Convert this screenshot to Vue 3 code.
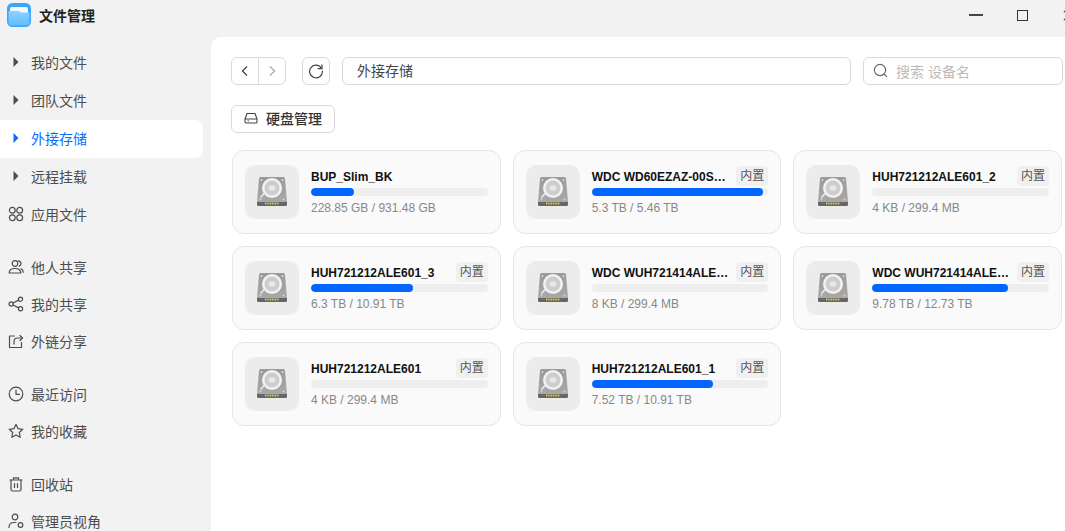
<template>
  <div class="app">
    <header class="titlebar">
      <div class="brand">
        <svg class="logo" viewBox="0 0 24 24">
          <defs>
            <linearGradient id="logoBody" x1="0" y1="0" x2="0" y2="1">
              <stop offset="0" stop-color="#8ed2ff" />
              <stop offset="1" stop-color="#63bcff" />
            </linearGradient>
          </defs>
          <rect width="24" height="24" rx="5.5" fill="#3aa6fb" />
          <path d="M3 6a2 2 0 0 1 2-2h14a2 2 0 0 1 2 2v5H3z" fill="#f2f9ff" />
          <path d="M1.500 8h10c1.500 0 2 1.500 3.500 1.500h7.500V19a3.500 3.500 0 0 1-3.500 3.500H5A3.500 3.500 0 0 1 1.500 19z" fill="url(#logoBody)" />
        </svg>
        <span class="app-name">文件管理</span>
      </div>
      <div class="win-controls">
        <span class="win-min"></span>
        <span class="win-max"></span>
        <svg class="win-close" viewBox="0 0 12 12"><path d="M1 1l10 10M11 1L1 11" stroke="#333" stroke-width="1.300" fill="none" /></svg>
      </div>
    </header>

    <div class="body">
      <aside class="sidebar">
        <nav v-for="(group, i) in navGroups" :key="i" class="nav-group" :class="group.cls">
          <a v-for="item in group.items" :key="item.label" class="nav-item" :class="{ active: item.active }">
            <span class="nav-icon">
              <svg v-if="item.icon === 'arrow'" class="caret" viewBox="0 0 6 10"><path d="M0.500 0L5.500 5L0.500 10z" fill="currentColor" /></svg>
              <svg v-else viewBox="0 0 16 16" class="glyph" fill="none" stroke="currentColor" stroke-width="1.200" stroke-linecap="round" stroke-linejoin="round">
                <template v-if="item.icon === 'apps'">
                  <circle cx="4.300" cy="4.300" r="2.900" />
                  <circle cx="11.700" cy="4.300" r="2.900" />
                  <circle cx="4.300" cy="11.700" r="2.900" />
                  <circle cx="11.700" cy="11.700" r="2.900" />
                </template>
                <template v-else-if="item.icon === 'users'">
                  <circle cx="7" cy="4.500" r="2.800" />
                  <path d="M1.200 14c0-3 2.500-4.500 5.800-4.500s5.800 1.500 5.800 4.500z" />
                  <path d="M10.500 1.900c1.700.3 2.500 1.500 2.500 2.700s-.8 2.200-1.800 2.700M13 9.800c1.300.6 2.200 1.900 2.200 3.500" />
                </template>
                <template v-else-if="item.icon === 'share'">
                  <circle cx="3.200" cy="8" r="2.100" />
                  <circle cx="12.500" cy="3.200" r="2.100" />
                  <circle cx="12.500" cy="12.800" r="2.100" />
                  <path d="M5 7l5.700-2.900M5 9l5.700 2.900" />
                </template>
                <template v-else-if="item.icon === 'link'">
                  <path d="M6.500 3H1.500v11.500h12V9.500" />
                  <path d="M6 11V8.500C6 6.500 7.500 5 9.500 5h5" />
                  <path d="M12 2.500L14.500 5 12 7.500" />
                </template>
                <template v-else-if="item.icon === 'clock'">
                  <circle cx="8" cy="8" r="6.800" />
                  <path d="M8 4v4.300h3.500" />
                </template>
                <template v-else-if="item.icon === 'star'">
                  <path d="M8 1.300l2 4.400 4.800.6-3.500 3.200.9 4.800L8 12l-4.200 2.300.9-4.800L1.200 6.300 6 5.700z" />
                </template>
                <template v-else-if="item.icon === 'trash'">
                  <path d="M2 4h12M5.500 4V1.800h5V4" />
                  <path d="M3 4v9.500a1.500 1.500 0 0 0 1.500 1.500h7a1.500 1.500 0 0 0 1.500-1.500V4" />
                  <path d="M6.500 7.500v4M9.500 7.500v4" />
                </template>
                <template v-else-if="item.icon === 'admin'">
                  <circle cx="7" cy="4" r="2.800" />
                  <path d="M1 14.500c0-3 2-5 5-5h2" />
                  <circle cx="12.500" cy="12" r="2.300" />
                </template>
              </svg>
            </span>
            <span>{{ item.label }}</span>
          </a>
        </nav>
      </aside>

      <main class="main">
        <div class="toolbar">
          <div class="nav-btns">
            <button class="nav-btn"><svg viewBox="0 0 12 12"><path d="M8 1.500L3.500 6 8 10.500" fill="none" stroke="#444" stroke-width="1.300" /></svg></button>
            <button class="nav-btn"><svg viewBox="0 0 12 12"><path d="M4 1.500L8.500 6 4 10.500" fill="none" stroke="#aaa" stroke-width="1.300" /></svg></button>
          </div>
          <button class="refresh">
            <svg viewBox="0 0 16 16" fill="none" stroke="#444" stroke-width="1.200" stroke-linecap="round"><path d="M13.700 5.500A6.400 6.400 0 1 0 14.400 8" /><path d="M14 1.800v3.900h-3.900" stroke-linejoin="round" /></svg>
          </button>
          <div class="path">外接存储</div>
          <div class="search">
            <svg viewBox="0 0 16 16" fill="none" stroke="#666" stroke-width="1.200" stroke-linecap="round"><circle cx="7.500" cy="7.500" r="6" /><path d="M12 12l2.500 2.500" /></svg>
            <span>搜索 设备名</span>
          </div>
        </div>

        <button class="disk-btn">
          <svg viewBox="0 0 14 14" fill="none" stroke="#444" stroke-width="1.100" stroke-linejoin="round"><path d="M1 8l2-5.500h8L13 8v3a1 1 0 0 1-1 1H2a1 1 0 0 1-1-1z" /><path d="M1 8h12M3.500 10h1.500" /></svg>
          <span>硬盘管理</span>
        </button>

        <section class="grid">
          <article v-for="d in disks" :key="d.name + d.size" class="card">
            <div class="hdd-box">
              <svg class="hdd" viewBox="0 0 30 30">
                <defs>
                  <linearGradient id="hddFace" x1="0" y1="0" x2="0" y2="1">
                    <stop offset="0" stop-color="#9a9a9a" />
                    <stop offset="1" stop-color="#a8a8a8" />
                  </linearGradient>
                </defs>
                <path d="M2 1.500A1.500 1.500 0 0 1 3.500 0h23A1.500 1.500 0 0 1 28 1.500L30 25H0z" fill="url(#hddFace)" />
                <path d="M0 25h30v2.500a1.500 1.500 0 0 1-1.500 1.500h-27A1.500 1.500 0 0 1 0 27.500z" fill="#666" />
                <path d="M8 26.500h14" stroke="#e8cf4a" stroke-width="2" stroke-dasharray="1 .7" />
                <circle cx="15" cy="11" r="10" fill="#f2f2f2" />
                <circle cx="15" cy="11" r="7.500" fill="#cdcdcd" />
                <ellipse cx="15" cy="11" rx="3.500" ry="2.800" fill="#e8e8e8" />
                <path d="M7 16.500l-3 3.500" stroke="#e8e8e8" stroke-width="1.800" stroke-linecap="round" />
                <circle cx="4.500" cy="3" r="1" fill="#d8d8d8" />
                <circle cx="25.500" cy="3" r="1" fill="#d8d8d8" />
                <circle cx="3.500" cy="22.500" r="1" fill="#d8d8d8" />
                <circle cx="26.500" cy="22.500" r="1" fill="#d8d8d8" />
              </svg>
            </div>
            <div class="info">
              <div class="name-row">
                <span class="name">{{ d.name }}</span>
                <span v-if="d.builtin" class="tag">内置</span>
              </div>
              <div class="bar"><div class="bar-fill" :style="{ width: d.pct + '%' }"></div></div>
              <div class="size">{{ d.size }}</div>
            </div>
          </article>
        </section>
      </main>
    </div>
  </div>
</template>

<script setup>
const navGroups = [
  {
    cls: "first",
    items: [
      { label: "我的文件", icon: "arrow" },
      { label: "团队文件", icon: "arrow" },
      { label: "外接存储", icon: "arrow", active: true },
      { label: "远程挂载", icon: "arrow" },
      { label: "应用文件", icon: "apps" },
    ],
  },
  {
    cls: "tight",
    items: [
      { label: "他人共享", icon: "users" },
      { label: "我的共享", icon: "share" },
      { label: "外链分享", icon: "link" },
    ],
  },
  {
    cls: "tight",
    items: [
      { label: "最近访问", icon: "clock" },
      { label: "我的收藏", icon: "star" },
    ],
  },
  {
    cls: "tight",
    items: [
      { label: "回收站", icon: "trash" },
      { label: "管理员视角", icon: "admin" },
    ],
  },
];

const disks = [
  { name: "BUP_Slim_BK", size: "228.85 GB / 931.48 GB", pct: 24.5, builtin: false },
  { name: "WDC WD60EZAZ-00S…", size: "5.3 TB / 5.46 TB", pct: 97, builtin: true },
  { name: "HUH721212ALE601_2", size: "4 KB / 299.4 MB", pct: 0, builtin: true },
  { name: "HUH721212ALE601_3", size: "6.3 TB / 10.91 TB", pct: 57.7, builtin: true },
  { name: "WDC WUH721414ALE…", size: "8 KB / 299.4 MB", pct: 0, builtin: true },
  { name: "WDC WUH721414ALE…", size: "9.78 TB / 12.73 TB", pct: 77, builtin: true },
  { name: "HUH721212ALE601", size: "4 KB / 299.4 MB", pct: 0, builtin: true },
  { name: "HUH721212ALE601_1", size: "7.52 TB / 10.91 TB", pct: 68.5, builtin: true },
];
</script>

<style scoped>
.app {
  width: 100vw;
  height: 100vh;
  overflow: hidden;
  display: flex;
  flex-direction: column;
  background: #f2f2f2;
  font-family: "Liberation Sans", "Noto Sans CJK SC", sans-serif;
  color: #333;
}

.titlebar {
  flex: 0 0 37px;
  display: flex;
  justify-content: space-between;
  align-items: flex-start;
}

.brand {
  display: flex;
  align-items: center;
  gap: 8px;
  padding: 3px 0 0 7px;
}

.logo {
  width: 24px;
  height: 24px;
}

.app-name {
  font-size: 14px;
  font-weight: 700;
  color: #222;
}

.win-controls {
  display: flex;
  align-items: center;
  height: 30px;
  margin-right: -9px;
}

.win-min {
  width: 14px;
  height: 2px;
  background: #444;
}

.win-max {
  width: 11px;
  height: 11px;
  margin-left: 34px;
  border: 1.500px solid #333;
  box-sizing: border-box;
}

.win-close {
  width: 11px;
  height: 11px;
  margin-left: 35px;
}

.body {
  flex: 1;
  min-height: 0;
  display: flex;
}

.sidebar {
  flex: 0 0 211px;
  box-sizing: border-box;
  padding: 7px 8px 0 0;
}

.nav-group {
  display: flex;
  flex-direction: column;
}

.nav-group.tight {
  margin-top: 16px;
}

.first + .nav-group.tight {
  margin-top: 15px;
}

.nav-item {
  display: flex;
  align-items: center;
  height: 38px;
  box-sizing: border-box;
  padding: 0 0 2px 7px;
  flex: none;
  gap: 6px;
  border-radius: 0 8px 8px 0;
  font-size: 14px;
  color: #4d4d4d;
}

.tight .nav-item {
  height: 37px;
}

.nav-item.active {
  background: #fff;
  color: #0a6cff;
}

.nav-icon {
  width: 18px;
  height: 18px;
  display: flex;
  align-items: center;
  justify-content: center;
}

.caret {
  width: 6px;
  height: 10px;
}

.glyph {
  width: 16px;
  height: 16px;
}

.main {
  flex: 1;
  min-width: 0;
  background: #fff;
  border-top-left-radius: 10px;
  padding: 20px 2px 0 20px;
}

.toolbar {
  display: flex;
  align-items: center;
  height: 28px;
}

.nav-btns {
  display: flex;
  width: 55px;
  height: 28px;
  box-sizing: border-box;
  border: 1px solid #d9d9d9;
  border-radius: 6px;
}

.nav-btn {
  flex: 1;
  padding: 0;
  border: none;
  background: none;
  display: flex;
  align-items: center;
  justify-content: center;
}

.nav-btn + .nav-btn {
  border-left: 1px solid #d9d9d9;
}

.nav-btn svg {
  width: 12px;
  height: 12px;
}

.refresh {
  width: 28px;
  height: 28px;
  margin-left: 16px;
  padding: 0;
  background: #fff;
  border: 1px solid #d9d9d9;
  border-radius: 6px;
  display: flex;
  align-items: center;
  justify-content: center;
}

.refresh svg {
  width: 16px;
  height: 16px;
}

.path {
  width: 509px;
  height: 28px;
  box-sizing: border-box;
  margin-left: 12px;
  padding-left: 14px;
  border: 1px solid #d9d9d9;
  border-radius: 6px;
  font-size: 14px;
  line-height: 26px;
  color: #444;
}

.search {
  width: 200px;
  height: 28px;
  box-sizing: border-box;
  margin-left: 12px;
  padding: 0 0 1px 9px;
  display: flex;
  align-items: center;
  gap: 8px;
  border: 1px solid #d9d9d9;
  border-radius: 6px;
  font-size: 14px;
  color: #bbb;
}

.search svg {
  width: 15px;
  height: 15px;
}

.disk-btn {
  margin-top: 20px;
  width: 104px;
  height: 28px;
  padding: 0 0 2px 12px;
  display: flex;
  align-items: center;
  gap: 8px;
  background: #fff;
  border: 1px solid #d9d9d9;
  border-radius: 6px;
  font-family: inherit;
  font-size: 14px;
  font-weight: 500;
  color: #333;
}

.disk-btn svg {
  width: 14px;
  height: 14px;
}

.grid {
  display: grid;
  grid-template-columns: repeat(3, minmax(0, 1fr));
  gap: 12px;
  margin: 17px 1px 0 1px;
}

.card {
  height: 84px;
  box-sizing: border-box;
  padding: 14px 12px 0 12px;
  display: flex;
  gap: 12px;
  background: #fafafa;
  border: 1px solid #e6e6e6;
  border-radius: 12px;
}

.hdd-box {
  flex: 0 0 54px;
  height: 54px;
  border-radius: 10px;
  background: #ececec;
  display: flex;
  align-items: center;
  justify-content: center;
}

.hdd {
  width: 30px;
  height: 30px;
}

.info {
  flex: 1;
  min-width: 0;
}

.name-row {
  display: flex;
  align-items: center;
  gap: 8px;
  height: 22px;
}

.name {
  flex: 1;
  min-width: 0;
  padding-top: 1px;
  font-size: 12px;
  font-weight: 700;
  color: #111;
  white-space: nowrap;
}

.tag {
  flex: none;
  padding: 0 4px;
  height: 20px;
  line-height: 20px;
  font-size: 12px;
  color: #555;
  background: #f0f0f0;
  border-radius: 4px;
}

.bar {
  height: 8px;
  margin-top: 1px;
  border-radius: 4px;
  background: #eeeeee;
  overflow: hidden;
}

.bar-fill {
  height: 100%;
  border-radius: 4px;
  background: #0066ff;
}

.size {
  margin-top: 5px;
  font-size: 12px;
  line-height: 14px;
  color: #888;
}
</style>
